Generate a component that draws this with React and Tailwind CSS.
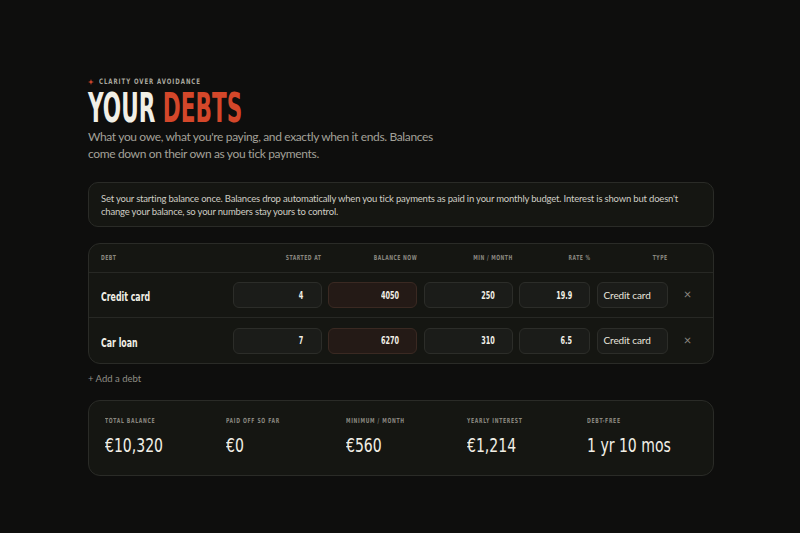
import React from "react";

const cond = "font-['Liberation_Sans_Narrow','DejaVu_Sans_Condensed',sans-serif]";
const body = "font-['Lato','Open_Sans',sans-serif]";

const debts = [
  { name: "Credit card", started: "4", balance: "4050", min: "250", rate: "19.9", type: "Credit card" },
  { name: "Car loan", started: "7", balance: "6270", min: "310", rate: "6.5", type: "Credit card" },
];

const stats = [
  { label: "Total balance", value: "€10,320" },
  { label: "Paid off so far", value: "€0" },
  { label: "Minimum / month", value: "€560" },
  { label: "Yearly interest", value: "€1,214" },
  { label: "Debt-free", value: "1 yr 10 mos" },
];

const cols = "grid grid-cols-[125px_89px_89px_89px_71px_71px_1fr] gap-x-[6.5px] pl-[12px] pr-[12px]";

const Field = ({ value, hot }) => (
  <div
    className={`h-[26px] rounded-md border flex items-center justify-end pr-[17px] ${
      hot ? "bg-[#241a16] border-[#3a2922]" : "bg-[#1b1c19] border-[#2c2d29]"
    }`}
  >
    <span className={`inline-block origin-right scale-x-[0.72] text-[10px] font-bold text-[#f1efe6] ${cond}`}>
      {value}
    </span>
  </div>
);

const Head = ({ children, left }) => (
  <span className={left ? "text-left" : "text-right"}>
    <span className={`inline-block whitespace-nowrap scale-x-[0.72] ${left ? "origin-left" : "origin-right"}`}>
      {children}
    </span>
  </span>
);

const App = () => {
  return (
    <div className={`min-h-screen bg-[#0e0e0d] ${body}`}>
      <div className="ml-[88px] w-[626px] pt-[77px]">
        {/* Eyebrow */}
        <div className="flex items-center h-[10px]">
          <svg width="6" height="6" viewBox="0 0 10 10" className="mr-[5px]">
            <path d="M5 0 L6.2 3.8 L10 5 L6.2 6.2 L5 10 L3.8 6.2 L0 5 L3.8 3.8 Z" fill="#d9472b" />
          </svg>
          <span
            className={`block origin-left scale-x-[0.8] whitespace-nowrap text-[7.5px] leading-[10px] font-bold tracking-[0.16em] text-[#a9a79e] ${cond}`}
          >
            CLARITY OVER AVOIDANCE
          </span>
        </div>

        {/* Title */}
        <h1
          className={`mt-[4px] text-[40px] leading-[34px] font-bold text-[#f1efe6] whitespace-nowrap origin-left scale-x-[0.6] ${cond}`}
        >
          YOUR <span className="text-[#d4472a]">DEBTS</span>
        </h1>
        <p className="mt-[3px] w-[356px] text-[12px] leading-[17px] tracking-[-0.03em] text-[#a3a199]">
          What you owe, what you're paying, and exactly when it ends. Balances come down on their own as you tick payments.
        </p>

        {/* Info note */}
        <div className="mt-[20px] rounded-[10px] border border-[#2a2b27] bg-[#151612] px-3 pt-[9px] pb-[8px] text-[9.5px] leading-[13px] tracking-[-0.02em] text-[#cfcdc4]">
          Set your starting balance once. Balances drop automatically when you tick payments as paid in your monthly budget. Interest is shown but doesn't change your balance, so your numbers stay yours to control.
        </div>

        {/* Debts table */}
        <div className="mt-[16px] rounded-[12px] border border-[#2a2b27] bg-[#151612]">
          <div
            className={`${cols} h-[29px] items-center border-b border-[#272824] text-[7px] font-bold tracking-[0.1em] text-[#8a8880] ${cond}`}
          >
            <Head left>DEBT</Head>
            <Head>STARTED AT</Head>
            <Head>BALANCE NOW</Head>
            <Head>MIN / MONTH</Head>
            <Head>RATE %</Head>
            <Head>TYPE</Head>
            <span />
          </div>
          {debts.map((d, i) => (
            <div
              key={d.name}
              className={`${cols} h-[45px] items-center ${i < debts.length - 1 ? "border-b border-[#272824]" : ""}`}
            >
              <span>
                <span
                  className={`inline-block origin-left scale-x-[0.67] whitespace-nowrap text-[13px] font-bold text-[#f1efe6] ${cond}`}
                >
                  {d.name}
                </span>
              </span>
              <Field value={d.started} />
              <Field value={d.balance} hot />
              <Field value={d.min} />
              <Field value={d.rate} />
              <div className="h-[26px] rounded-md border border-[#2c2d29] bg-[#1b1c19] flex items-center pl-[6px] text-[10px] tracking-[-0.01em] text-[#e8e6dd]">
                {d.type}
              </div>
              <span className="text-center text-[13px] text-[#8a8880]">×</span>
            </div>
          ))}
        </div>

        <div className="mt-[9px] text-[9.5px] leading-[12px] text-[#8f8d85]">+ Add a debt</div>

        {/* Summary */}
        <div className="mt-[15px] rounded-[12px] border border-[#2a2b27] bg-[#151612] pl-[16px] pr-[5px] pt-[16px] pb-[18px] grid grid-cols-5">
          {stats.map((s) => (
            <div key={s.label}>
              <div
                className={`block origin-left scale-x-[0.72] whitespace-nowrap text-[7px] leading-[8px] font-bold tracking-[0.14em] uppercase text-[#8a8880] ${cond}`}
              >
                {s.label}
              </div>
              <div
                className={`mt-[8px] origin-left scale-x-[0.78] whitespace-nowrap text-[20px] leading-[24px] text-[#f1efe6] ${cond}`}
              >
                {s.value}
              </div>
            </div>
          ))}
        </div>
      </div>
    </div>
  );
};

export default App;
